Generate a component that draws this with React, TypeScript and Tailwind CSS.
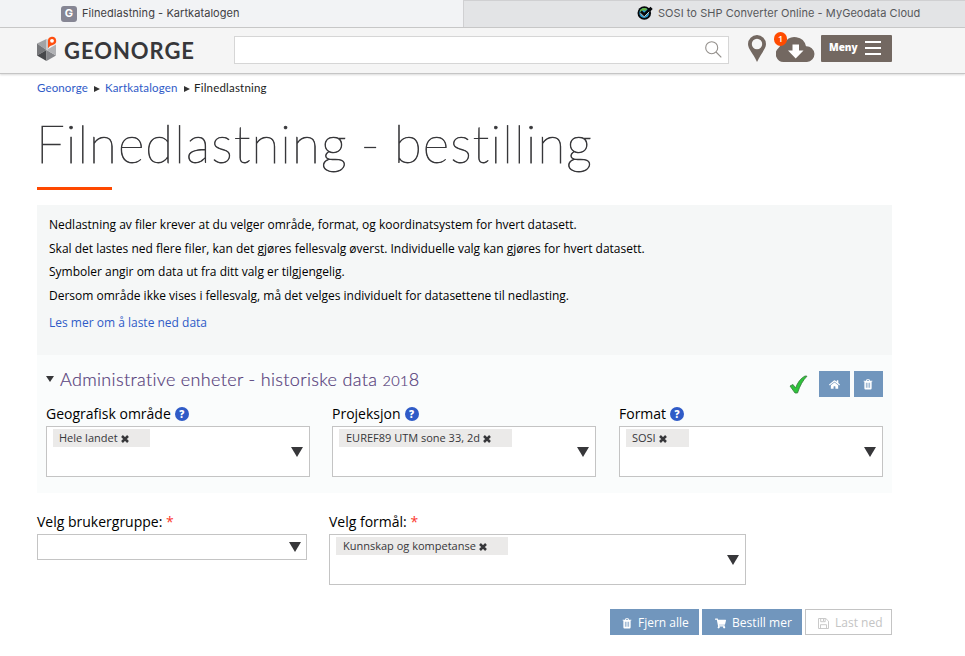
import React from "react";
import { FaHome, FaShoppingCart } from "react-icons/fa";

const sans = "font-['Open_Sans',sans-serif]";
const display = "font-['Lato',sans-serif]";

function TrashIcon({ className }: { className: string }) {
  return (
    <svg viewBox="0 0 11 12" className={className}>
      <path fill="currentColor" fillRule="evenodd" d="M3.3 1.8 3.8.6Q4 .2 4.4.2H6.6Q7 .2 7.2.6L7.7 1.8H10.3V2.8H9.5V10.2Q9.5 11.6 8.3 11.6H2.7Q1.5 11.6 1.5 10.2V2.8H.7V1.8ZM4.3 1.8H6.7L6.4 1H4.6ZM3.2 4.2V9.6H4V4.2ZM5.1 4.2V9.6H5.9V4.2ZM7 4.2V9.6H7.8V4.2Z" />
    </svg>
  );
}

function FloppyIcon() {
  return (
    <svg viewBox="0 0 11 11" className="h-[11px] w-[11px]" fill="none" stroke="currentColor" strokeWidth="0.9">
      <path d="M.5.5H7.8L10.5 3.2V10.5H.5ZM2.7.5V3.7H7.2V.5M2.5 10.5V6.7H8.5V10.5M5.5 1V3" />
    </svg>
  );
}

function Help() {
  return (
    <span className="mt-[2px] flex h-[14px] w-[14px] items-center justify-center rounded-full bg-[#2f5bc7] text-[10px] font-extrabold leading-none text-white">?</span>
  );
}

function Arrow({ className = "" }: { className?: string }) {
  return (
    <svg viewBox="0 0 12 10" className={`h-[10px] w-3 shrink-0 ${className}`}>
      <path d="M0 0H12L6 10Z" fill="#37373a" />
    </svg>
  );
}

function Select({ value, chip, box }: { value: string; chip: string; box: string }) {
  return (
    <div className={`flex h-[51px] border border-[#c4c4c4] bg-white pl-[6px] pr-[6px] pt-[2px] ${box}`}>
      <div className={`flex h-[18px] items-center gap-[3px] bg-[#ebeae9] text-[11px] text-[#37373a] ${chip}`}>
        <span className="whitespace-nowrap">{value}</span>
        <svg viewBox="0 0 8 8" className="mt-px h-2 w-2 shrink-0">
          <path d="M1 1 7 7M7 1 1 7" stroke="#37373a" strokeWidth="2.5" />
        </svg>
      </div>
      <Arrow className="ml-auto mt-[18px]" />
    </div>
  );
}

function Field({ label, children }: { label: string; children: React.ReactNode }) {
  return (
    <div className="w-[264px]">
      <div className="flex h-[26px] items-center gap-1 text-[14px] text-black">
        <span>{label}</span>
        <Help />
      </div>
      {children}
    </div>
  );
}

function Tabs() {
  return (
    <div className="flex h-7 border-b border-[#c9c9c9] font-['Inter',sans-serif] text-[11px] text-[#3f4043]">
      <div className="flex w-[463px] items-center bg-[#f2f3f5] pl-[61px]">
        <span className="flex h-4 w-4 items-center justify-center rounded-[3px] bg-[#868694] text-[11px] font-bold text-white">G</span>
        <span className="ml-[5px] whitespace-nowrap tracking-[0.06px]">Filnedlastning - Kartkatalogen</span>
      </div>
      <div className="flex flex-1 items-center border-l border-t border-[#d0d0d2] bg-[#e3e4e6] pl-[173px] text-[#57585b]">
        <svg viewBox="0 0 16 14" className="-mt-[3px] h-[14px] w-4">
          <circle cx="7.3" cy="7" r="6.8" fill="#05080b" />
          <circle cx="7.2" cy="7" r="4.9" fill="#299bd0" />
          <path d="M2.6 5.2A5 5 0 0 1 10.3 3L8 5 6 4 4.5 6Z" fill="#69b53f" />
          <path d="M3.7 5.8 7.2 9 14.6 1.8" fill="none" stroke="#05080b" strokeWidth="3.2" />
          <path d="M3.2 7 7.2 10.8 12.2 5.8" fill="none" stroke="#dce5e8" strokeWidth=".9" />
        </svg>
        <span className="-mt-px ml-[5px] whitespace-nowrap tracking-[0.05px]">SOSI to SHP Converter Online - MyGeodata Cloud</span>
      </div>
    </div>
  );
}

function Header() {
  return (
    <header className="flex h-[46px] items-start border-b border-[#c5c5c5] bg-[#f5f5f5] pl-[37px] shadow-[0_1px_2px_rgba(0,0,0,0.15)]">
      <svg viewBox="0 0 20 26" className="mt-[8px] h-[26px] w-5">
        <path d="M0 7.5 9.5 3V14Z" fill="#a2a3a5" />
        <path d="M0 7.5 9.5 14 0 19.5Z" fill="#76777a" />
        <path d="M0 19.5 9.5 14V25Z" fill="#47484b" />
        <path d="M9.5 14 19 19.5 9.5 25Z" fill="#85868a" />
        <path d="M19 8.5V19.5L9.5 14Z" fill="#b1b2b5" />
        <path d="M9.5 3 12 4V12L9.5 14Z" fill="#c8c8ca" />
        <path d="M11 12V5A4.1 4.1 0 1 1 15.8 8.9Q13 9.5 11 12Z" fill="#fe4f10" />
        <circle cx="15" cy="4.8" r="1.9" fill="#fff" />
      </svg>
      <span className="ml-[7px] mt-[9px] w-[132px] whitespace-nowrap font-['Lato',sans-serif] text-[22px] font-bold leading-[28px] tracking-[0.95px] text-[#37373a]">GEONORGE</span>
      <div className="ml-[38px] mt-2 flex h-7 w-[495px] items-center justify-end border border-[#d6d6d6] bg-white pr-[6px]">
        <svg viewBox="0 0 17 17" className="-mt-[2px] h-[17px] w-[17px]" fill="none" stroke="#94908c" strokeWidth="1.1">
          <circle cx="6.7" cy="6.7" r="6" />
          <path d="m11 11 5.3 5.3" />
        </svg>
      </div>
      <svg viewBox="0 0 18 27" className="ml-[19px] mt-[7px] h-[27px] w-[18px]">
        <path fillRule="evenodd" d="M9 0A9 9 0 0 0 0 9C0 14 5 18 9 27 13 18 18 14 18 9A9 9 0 0 0 9 0ZM9 3.8A5.2 5.2 0 1 1 9 14.2 5.2 5.2 0 0 1 9 3.8Z" fill="#736861" />
      </svg>
      <div className="relative ml-[10px] mt-2 h-[26px] w-[39px]">
        <svg viewBox="0 0 39 26" className="h-full w-full">
          <path d="M8 26A8 8 0 0 1 2.5 12 12 10 0 0 1 8.5 7A11.6 11.6 0 0 1 30 10.2 7.9 7.9 0 0 1 31 26Z" fill="#736861" />
          <path d="M16.5 8.5H23V14.5H27.5L19.7 22.5 12 14.5H16.5Z" fill="white" />
        </svg>
        <span className="absolute -left-[2px] -top-[4px] flex h-[14px] w-[13px] items-center justify-center rounded-full bg-[#ff4b00] text-[9px] font-semibold text-white">1</span>
      </div>
      <div className="ml-[6px] mt-[7px] flex h-[27px] w-[71px] items-center rounded-[1px] bg-[#736861] pl-2 text-white">
        <span className="-mt-[3px] w-9 text-[10px] font-extrabold leading-none">Meny</span>
        <span className="-mt-[2px] flex flex-col gap-1">
          <i className="h-[2px] w-4 bg-white" /><i className="h-[2px] w-4 bg-white" /><i className="h-[2px] w-4 bg-white" />
        </span>
      </div>
    </header>
  );
}

export default function App() {
  return (
    <div className={`h-[656px] w-[965px] overflow-hidden bg-white ${sans}`}>
      <Tabs />
      <Header />
      <main className="pl-[37px]">
        <nav className={`flex h-7 items-center text-[11.5px] ${display}`}>
          <span className="w-[57px] tracking-[0.12px] text-[#2f5bc7]">Geonorge</span>
          <svg viewBox="0 0 6 6" className="mt-[2px] h-[6px] w-[6px]"><path d="M0 0 6 3 0 6Z" fill="#333" /></svg>
          <span className="ml-[5px] w-[79px] tracking-[0.15px] text-[#2f5bc7]">Kartkatalogen</span>
          <svg viewBox="0 0 6 6" className="mt-[2px] h-[6px] w-[6px]"><path d="M0 0 6 3 0 6Z" fill="#333" /></svg>
          <span className="ml-[4px] tracking-[0.2px] text-[#222]">Filnedlastning</span>
        </nav>
        <h1 className={`-ml-px h-[85px] whitespace-nowrap pt-[10px] text-[51px] font-thin leading-[64px] tracking-[1.12px] text-[#37373a] [-webkit-text-stroke:0.75px_#37373a] [font-variant-ligatures:none] [word-spacing:-2.5px] ${display}`}>Filnedlastning - bestilling</h1>
        <div className="h-[3px] w-[75px] bg-[#fe4800]" />
        <section className="mt-[15px] h-[150px] w-[855px] bg-[#f5f7f7] pl-3 pt-[8px] text-[12px] leading-[23.7px] text-black">
          <p>Nedlastning av filer krever at du velger område, format, og koordinatsystem for hvert datasett.</p>
          <p>Skal det lastes ned flere filer, kan det gjøres fellesvalg øverst. Individuelle valg kan gjøres for hvert datasett.</p>
          <p>Symboler angir om data ut fra ditt valg er tilgjengelig.</p>
          <p>Dersom område ikke vises i fellesvalg, må det velges individuelt for datasettene til nedlasting.</p>
          <p className="mt-[3px] text-[#2f5bc7]">Les mer om å laste ned data</p>
        </section>
        <section className="h-[138px] w-[855px] bg-[#fafcfc] pl-[9px] pr-[9px]">
          <div className="flex h-[45px] items-start">
            <svg viewBox="0 0 8 6" className="mt-[21px] h-[6px] w-2"><path d="M0 0H8L4 6Z" fill="#37373a" /></svg>
            <h2 className={`ml-[6px] mt-[11px] whitespace-nowrap text-[18px] font-light leading-[26px] tracking-[0.34px] text-[#56407b] [-webkit-text-stroke:0.2px_#56407b] [font-variant-ligatures:none] ${display}`}>Administrative enheter - historiske data <span className="text-[14.5px]">201</span>8</h2>
            <svg viewBox="0 0 19 19" className="ml-auto mr-[-1px] mt-[20px] h-[19px] w-[19px]">
              <path d="M1 11 4 9.5 6.5 13Q10 4 16 1L18 1.2Q12 7 8.5 18H6Z" fill="#2ec43b" stroke="#39793e" strokeWidth=".8" />
            </svg>
            <button className="ml-[12px] mt-4 flex h-[26px] w-[31px] items-center justify-center bg-[#7196bd] text-white"><FaHome className="mt-px h-[11px] w-[11px]" /></button>
            <button className="ml-1 mt-4 flex h-[26px] w-[29px] items-center justify-center bg-[#7196bd] pr-px text-white"><TrashIcon className="h-[11px] w-[10px]" /></button>
          </div>
          <div className="flex gap-[22px]">
            <Field label="Geografisk område"><Select value="Hele landet" box="w-[264px]" chip="w-[97px] pl-[6px]" /></Field>
            <Field label="Projeksjon"><Select value="EUREF89 UTM sone 33, 2d" box="w-[264px]" chip="w-[173px] pl-[7px]" /></Field>
            <div className="ml-px"><Field label="Format"><Select value="SOSI" box="w-[264px]" chip="w-[63px] pl-[6px]" /></Field></div>
          </div>
        </section>
        <section className="flex pt-[16px] text-[14px] text-black">
          <div className="w-[292px]">
            <div className="h-[25px] leading-[26px]">Velg brukergruppe: <span className="text-[#fb382c]">*</span></div>
            <div className="flex h-[26px] w-[270px] items-center justify-end border border-[#c4c4c4] pr-[5px]"><Arrow /></div>
          </div>
          <div>
            <div className="h-[25px] leading-[26px]">Velg formål: <span className="text-[#fb382c]">*</span></div>
            <Select value="Kunnskap og kompetanse" box="w-[417px]" chip="w-[172px] pl-[7px]" />
          </div>
        </section>
        <div className="mt-6 flex w-[855px] justify-end gap-[3px] text-[12px] text-white">
          <button className="flex h-[26px] w-[89px] items-center gap-[6px] bg-[#7196bd] pl-3 pt-[2px]"><TrashIcon className="h-[11px] w-[10px]" />Fjern alle</button>
          <button className="flex h-[26px] w-[100px] items-center gap-[6px] bg-[#7196bd] pl-[13px] pt-[2px] tracking-[0.05px]"><FaShoppingCart className="h-[11px] w-[11px]" />Bestill mer</button>
          <button className="flex h-[26px] w-[87px] items-center gap-[6px] border border-[#c4c4c4] pl-[12px] pt-[2px] text-[#c4c4c4]"><FloppyIcon />Last ned</button>
        </div>
      </main>
    </div>
  );
}
